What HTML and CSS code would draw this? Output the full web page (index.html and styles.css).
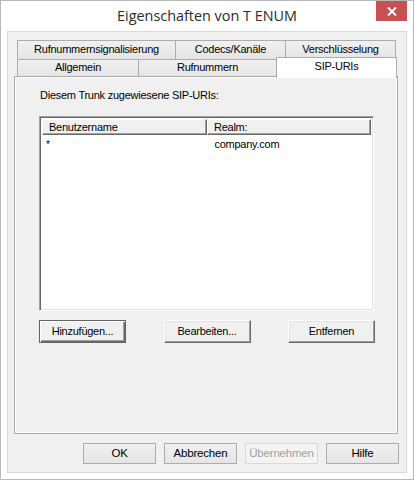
FILE: index.html
```html
<!DOCTYPE html>
<html>
<head>
<meta charset="utf-8">
<link rel="stylesheet" href="styles.css">
</head>
<body>
<div class="window">
  <div class="titlebar">
    <span class="title">Eigenschaften von T ENUM</span>
    <div class="close">
      <svg width="10" height="9" viewBox="0 0 10 9"><path d="M1 0.5 L9 8.5 M9 0.5 L1 8.5" stroke="#fff" stroke-width="2" fill="none"/></svg>
    </div>
  </div>
  <div class="client">
    <div class="tabs">
      <div class="tabrow row1">
        <div class="tab t-ruf-sig">Rufnummernsignalisierung</div>
        <div class="tab t-codecs">Codecs/Kanäle</div>
        <div class="tab t-versch">Verschlüsselung</div>
      </div>
      <div class="tabrow row2">
        <div class="tab t-allg">Allgemein</div>
        <div class="tab t-ruf">Rufnummern</div>
        <div class="tab t-sip sel">SIP-URIs</div>
      </div>
    </div>
    <div class="panel">
      <div class="label">Diesem Trunk zugewiesene SIP-URIs:</div>
      <div class="list">
        <div class="lhead">
          <div class="hcell c1">Benutzername</div>
          <div class="hcell c2">Realm:</div>
        </div>
        <div class="lrow">
          <div class="cell c1">*</div>
          <div class="cell c2">company.com</div>
        </div>
      </div>
      <div class="btnrow">
        <div class="cbtn default">Hinzufügen...</div>
        <div class="cbtn">Bearbeiten...</div>
        <div class="cbtn">Entfernen</div>
      </div>
    </div>
    <div class="dlgbtns">
      <div class="wbtn">OK</div>
      <div class="wbtn">Abbrechen</div>
      <div class="wbtn disabled">Übernehmen</div>
      <div class="wbtn">Hilfe</div>
    </div>
  </div>
</div>
</body>
</html>
```

FILE: styles.css
```css
html, body {
  margin: 0;
  padding: 0;
  background: #ffffff;
}
.window {
  position: relative;
  width: 414px;
  height: 480px;
  box-sizing: border-box;
  border: 1px solid #b9b9b9;
  background: #ffffff;
}
.titlebar {
  height: 30px;
  display: flex;
  justify-content: center;
  align-items: flex-start;
}
.title {
  font-family: "Open Sans", "Noto Sans", sans-serif;
  font-size: 14.4px;
  color: #2b2b2b;
  line-height: 20px;
  margin-top: 5px;
}
.close {
  position: absolute;
  top: 0;
  right: 6px;
  width: 31px;
  height: 20px;
  background: #c75050;
  display: flex;
  align-items: center;
  justify-content: center;
}
.client {
  margin: 0 6px;
  height: 442px;
  box-sizing: border-box;
  border: 1px solid #d9d9d9;
  background: #f0f0f0;
  padding-top: 8px;
  font-family: "Liberation Sans", Arial, sans-serif;
  font-size: 11px;
  letter-spacing: -0.25px;
  color: #000;
}
.tabs {
  margin-left: 9px;
  width: 379px;
}
.tabrow {
  display: flex;
}
.row1 {
  height: 19px;
}
.row2 {
  height: 17px;
  align-items: flex-end;
}
.tab {
  box-sizing: border-box;
  border: 1px solid #acacac;
  border-bottom: none;
  background: linear-gradient(#f0f0f0, #e5e5e5);
  text-align: center;
  line-height: 16px;
  height: 19px;
}
.row2 .tab {
  height: 17px;
  line-height: 15px;
}
.tab + .tab {
  margin-left: -1px;
}
.t-ruf-sig { width: 159px; }
.t-codecs { width: 111px; }
.t-versch { width: 111px; }
.t-allg { width: 122px; }
.t-ruf { width: 139px; }
.row2 .tab.sel {
  width: 121px;
  height: 21px;
  margin-bottom: -2px;
  margin-right: -1px;
  background: #ffffff;
  position: relative;
  z-index: 2;
  line-height: 17px;
  border-color: #acacac;
}
.panel {
  margin-left: 6px;
  width: 384px;
  height: 358px;
  box-sizing: border-box;
  border: 1px solid #acacac;
  box-shadow: inset 1px 1px #ffffff, inset -1px -1px #ffffff;
  background: #f0f0f0;
  padding: 12px 0 0 24px;
}
.label {
  line-height: 13px;
  padding-left: 1px;
}
.list {
  margin-top: 14px;
  width: 335px;
  height: 195px;
  box-sizing: border-box;
  border: 1px solid;
  border-color: #a0a0a0 #ffffff #ffffff #a0a0a0;
  box-shadow: inset 1px 1px #696969, inset -1px -1px #e3e3e3;
  background: #ffffff;
  padding: 2px 2px;
}
.lhead {
  display: flex;
  height: 16px;
}
.hcell {
  box-sizing: border-box;
  height: 16px;
  line-height: 14px;
  background: #f0f0f0;
  border: 1px solid;
  border-color: #ffffff #696969 #696969 #ffffff;
  box-shadow: inset -1px -1px #a0a0a0;
  padding-left: 6px;
}
.lhead .c1 { width: 165px; }
.lhead .c2 { width: 164px; }
.lrow {
  display: flex;
  height: 15px;
  line-height: 15px;
  margin-top: 2px;
}
.cell {
  padding-left: 4px;
}
.lrow .c1 { width: 168px; font-size: 10px; }
.lrow .c2 { width: 160px; }
.btnrow {
  margin-top: 9px;
  width: 336px;
  display: flex;
  justify-content: space-between;
}
.cbtn {
  box-sizing: border-box;
  width: 87px;
  height: 23px;
  border: 1px solid;
  border-color: #ffffff #696969 #696969 #ffffff;
  box-shadow: inset -1px -1px #a0a0a0, inset 1px 1px #e3e3e3;
  background: #f0f0f0;
  text-align: center;
  line-height: 20px;
}
.cbtn.default {
  border-color: #646464;
  box-shadow: inset 1px 1px #ffffff, inset -1px -1px #696969, inset -2px -2px #a0a0a0;
}
.dlgbtns {
  margin-top: 9px;
  margin-right: 7px;
  display: flex;
  justify-content: flex-end;
  gap: 8px;
}
.wbtn {
  box-sizing: border-box;
  width: 73px;
  height: 21px;
  border: 1px solid #acacac;
  background: linear-gradient(#f0f0f0, #e5e5e5);
  text-align: center;
  line-height: 19px;
  font-size: 11.5px;
  letter-spacing: -0.2px;
  color: #000;
}
.wbtn.disabled {
  border-color: #d9d9d9;
  background: #f4f4f4;
  color: #a0a0a0;
}
```
